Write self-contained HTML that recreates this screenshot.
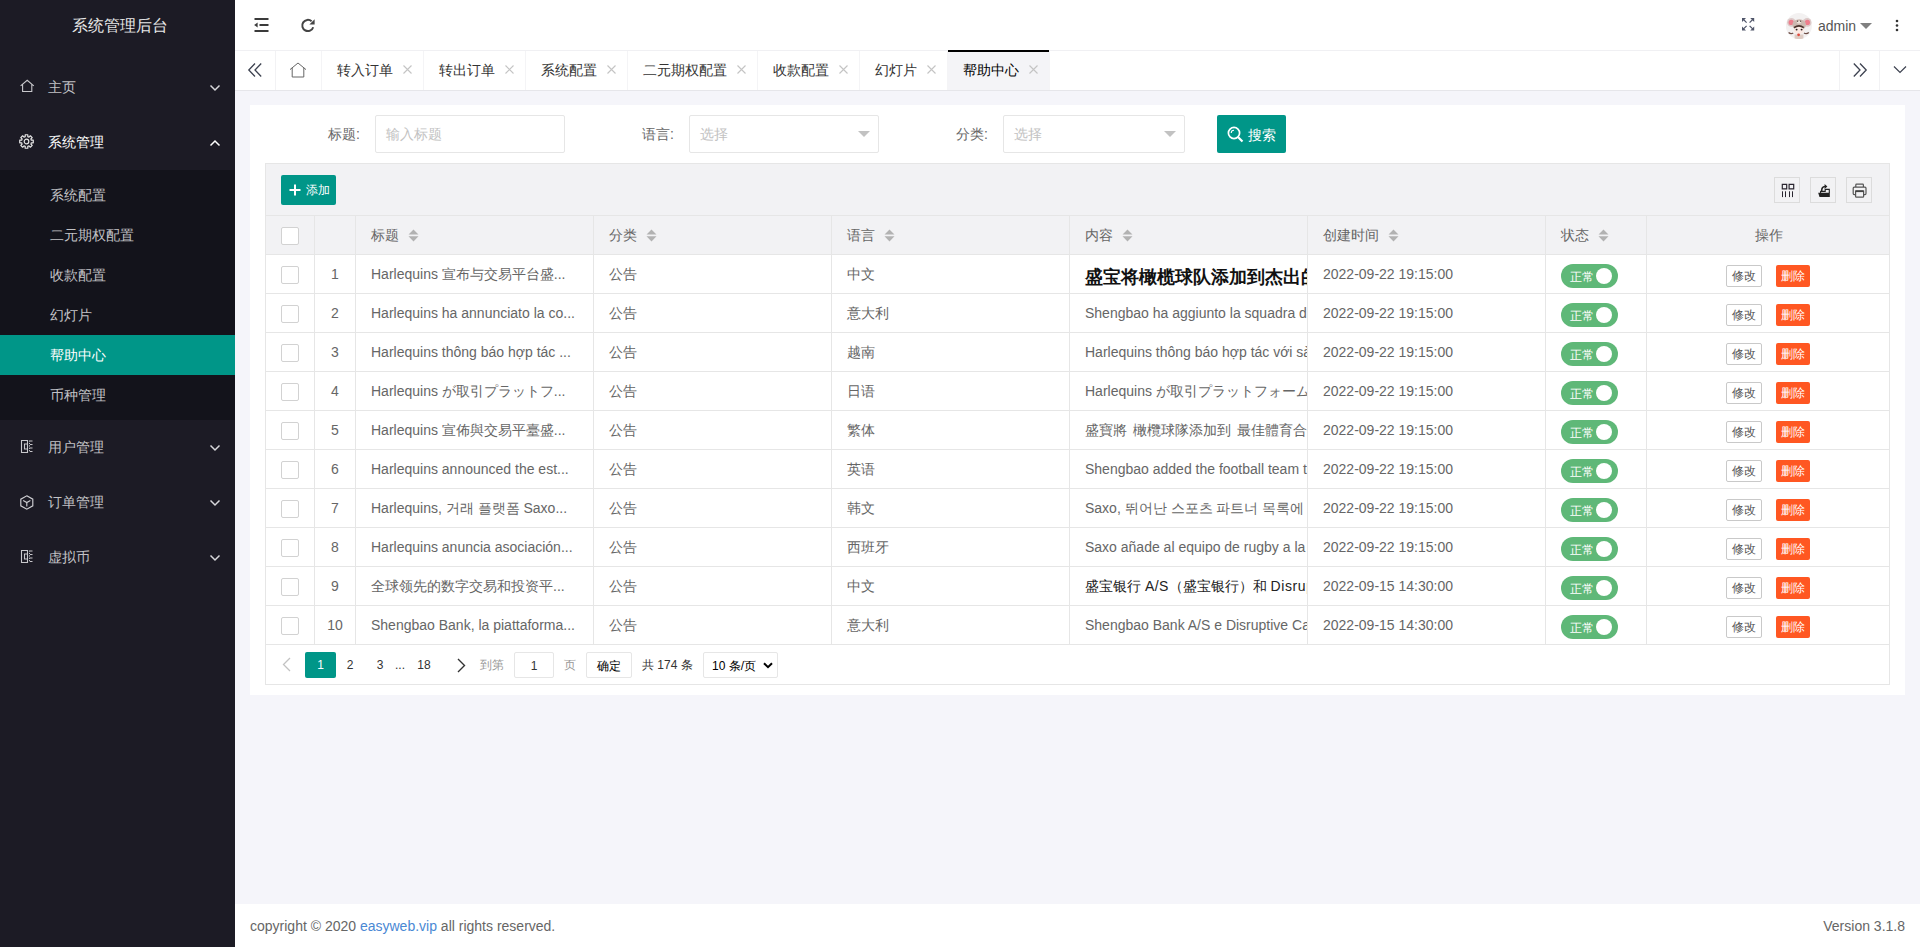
<!DOCTYPE html>
<html><head><meta charset="utf-8">
<style>
*{box-sizing:border-box;margin:0;padding:0}
html,body{width:1920px;height:947px;overflow:hidden}
body{position:relative;background:#f5f5fa;font-family:"Liberation Sans",sans-serif;font-size:14px;color:#666}
.abs{position:absolute}
svg{display:block}
/* sidebar */
#side{position:absolute;left:0;top:0;width:235px;height:947px;background:#1c1b25}
#logo{position:absolute;left:0;top:1px;width:235px;height:50px;line-height:50px;text-align:center;color:#e8e8e8;font-size:16px;padding-left:5px}
.nav{position:absolute;left:0;width:235px;height:55px;color:#c2c2c6}
.nav .ic{position:absolute;left:20px;top:20px}
.nav .tx{position:absolute;left:48px;top:1px;line-height:55px;font-size:14px}
.nav .ar{position:absolute;left:209px;top:25px}
#sub{position:absolute;left:0;top:170px;width:235px;height:250px;background:#13131b}
.si{position:absolute;left:0;width:235px;height:40px;line-height:40px;padding-left:50px;color:#c2c2c6;font-size:14px}
.si.on{background:#009688;color:#fff}
/* header */
#hdr{position:absolute;left:235px;top:0;width:1685px;height:51px;background:#fff;border-bottom:1px solid #f0f0f3}
#tabs{position:absolute;left:235px;top:51px;width:1685px;height:40px;background:#fff;border-bottom:1px solid #e6e6ea}
.tab{position:absolute;top:0;height:39px;line-height:39px;border-right:1px solid #f4f4f6;font-size:14px;color:#333;padding-left:15px}
.tab .x{position:absolute;top:14px}
/* card */
#card{position:absolute;left:250px;top:105px;width:1655px;height:590px;background:#fff}
.lbl{position:absolute;top:115px;height:38px;line-height:38px;font-size:14px;color:#666}
.inp{position:absolute;top:115px;height:38px;border:1px solid #e6e6e6;background:#fff;border-radius:2px;line-height:36px;padding-left:10px;color:#c2c2c2;font-size:14px}
.caret{position:absolute;width:0;height:0;border-left:6px solid transparent;border-right:6px solid transparent;border-top:6px solid #c2c2c2}
.btn{position:absolute;background:#009688;color:#fff;border-radius:2px}
/* table */
#tbl{position:absolute;left:265px;top:163px;width:1625px;height:522px;border:1px solid #e6e6e6;background:#fff}
#tool{position:absolute;left:0;top:0;width:1623px;height:52px;background:#f2f2f4;border-bottom:1px solid #e6e6e6}
.tb{position:absolute;top:13px;width:26px;height:26px;border:1px solid #dcdcdc}
#thead{position:absolute;left:0;top:52px;width:1623px;height:39px;background:#f2f2f4;border-bottom:1px solid #e6e6e6}
.row{position:absolute;left:0;width:1623px;height:39px;border-bottom:1px solid #e6e6e6}
.c{position:absolute;top:0;height:38px;line-height:38px;border-right:1px solid #e6e6e6;padding:0 15px;white-space:nowrap;overflow:hidden;font-size:14px;color:#666}
.chk{position:absolute;left:15px;top:11px;width:18px;height:18px;border:1px solid #d2d2d2;border-radius:2px;background:#fff}
.sort{position:absolute;top:13px}
.sw{position:absolute;left:15px;top:9px;width:57px;height:24px;border-radius:12px;background:#5fb878;color:#fff;font-size:12px;line-height:26px;padding-left:9px}
.sw i{position:absolute;left:35px;top:4px;width:16px;height:16px;border-radius:50%;background:#fff}
.bx{position:absolute;top:10px;height:22px;line-height:20px;font-size:12px;padding:0 5px;border-radius:2px}
/* pager */
#pager{position:absolute;left:0;top:481px;width:1623px;height:39px}
.pg{position:absolute;top:7px;height:26px;line-height:26px;font-size:12px;color:#333}
#foot{position:absolute;left:235px;top:904px;width:1685px;height:43px;background:#fff;line-height:44px;font-size:14px;color:#666;padding:0 15px}
</style></head><body>
<div id="side">
  <div id="logo">系统管理后台</div>
  <div class="nav" style="top:59px">
    <svg class="ic" width="15" height="14" viewBox="0 0 15 14"><path d="M0.6 6.8 L7.2 1.3 L13.8 6.8 M2.6 5.2 V12.5 H11.8 V5.2" fill="none" stroke="#c8c8cc" stroke-width="1.1"/></svg>
    <span class="tx">主页</span>
    <svg class="ar" width="12" height="8" viewBox="0 0 12 8"><path d="M1.5 1.5 L6 6 L10.5 1.5" fill="none" stroke="#d8d8dc" stroke-width="1.5"/></svg>
  </div>
  <div class="nav" style="top:114px;color:#fff">
    <svg class="ic" style="top:20px;left:19px" width="15" height="15" viewBox="0 0 15 15"><path d="M5.59 2.88 L6.21 2.67 L6.18 0.73 L8.82 0.73 L8.79 2.67 L9.41 2.88 L10.00 3.17 L11.36 1.78 L13.22 3.64 L11.83 5.00 L12.12 5.59 L12.33 6.21 L14.27 6.18 L14.27 8.82 L12.33 8.79 L12.12 9.41 L11.83 10.00 L13.22 11.36 L11.36 13.22 L10.00 11.83 L9.41 12.12 L8.79 12.33 L8.82 14.27 L6.18 14.27 L6.21 12.33 L5.59 12.12 L5.00 11.83 L3.64 13.22 L1.78 11.36 L3.17 10.00 L2.88 9.41 L2.67 8.79 L0.73 8.82 L0.73 6.18 L2.67 6.21 L2.88 5.59 L3.17 5.00 L1.78 3.64 L3.64 1.78 L5.00 3.17 Z" fill="none" stroke="#e6e6e6" stroke-width="1.2" stroke-linejoin="round"/><circle cx="7.5" cy="7.5" r="2.3" fill="none" stroke="#e6e6e6" stroke-width="1.2"/></svg>
    <span class="tx">系统管理</span>
    <svg class="ar" width="12" height="8" viewBox="0 0 12 8"><path d="M1.5 6.5 L6 2 L10.5 6.5" fill="none" stroke="#fff" stroke-width="1.5"/></svg>
  </div>
  <div id="sub">
    <div class="si" style="top:5px">系统配置</div>
    <div class="si" style="top:45px">二元期权配置</div>
    <div class="si" style="top:85px">收款配置</div>
    <div class="si" style="top:125px">幻灯片</div>
    <div class="si on" style="top:165px">帮助中心</div>
    <div class="si" style="top:205px">币种管理</div>
  </div>
  <div class="nav" style="top:419px">
    <svg class="ic" style="top:20px" width="14" height="15" viewBox="0 0 14 15"><path d="M1.5 1.5 H7.5 V13.5 H1.5 Z M4.5 5 H7.5 V10 H4.5 Z" fill="none" stroke="#c8c8cc" stroke-width="1.1"/><path d="M9.5 1.5 V13.5" stroke="#c8c8cc" stroke-width="1" stroke-dasharray="1.2 1.2"/><path d="M10 2 H12.5 M10 5.5 H12.5 M10 9 H12.5 M10 12.5 H12.5" stroke="#c8c8cc" stroke-width="1.2"/></svg>
    <span class="tx">用户管理</span>
    <svg class="ar" width="12" height="8" viewBox="0 0 12 8"><path d="M1.5 1.5 L6 6 L10.5 1.5" fill="none" stroke="#d8d8dc" stroke-width="1.5"/></svg>
  </div>
  <div class="nav" style="top:474px">
    <svg class="ic" style="top:21px" width="14" height="15" viewBox="0 0 14 15"><path d="M6.8 0.8 L12.8 4.2 V10.8 L6.8 14.2 L0.8 10.8 V4.2 Z M3.2 5.6 L6.8 7.5 L10.4 5.6 M6.8 7.5 V11.6" fill="none" stroke="#d0d0d4" stroke-width="1.15"/></svg>
    <span class="tx">订单管理</span>
    <svg class="ar" width="12" height="8" viewBox="0 0 12 8"><path d="M1.5 1.5 L6 6 L10.5 1.5" fill="none" stroke="#d8d8dc" stroke-width="1.5"/></svg>
  </div>
  <div class="nav" style="top:529px">
    <svg class="ic" style="top:20px" width="14" height="15" viewBox="0 0 14 15"><path d="M1.5 1.5 H7.5 V13.5 H1.5 Z M4.5 5 H7.5 V10 H4.5 Z" fill="none" stroke="#c8c8cc" stroke-width="1.1"/><path d="M9.5 1.5 V13.5" stroke="#c8c8cc" stroke-width="1" stroke-dasharray="1.2 1.2"/><path d="M10 2 H12.5 M10 5.5 H12.5 M10 9 H12.5 M10 12.5 H12.5" stroke="#c8c8cc" stroke-width="1.2"/></svg>
    <span class="tx">虚拟币</span>
    <svg class="ar" width="12" height="8" viewBox="0 0 12 8"><path d="M1.5 1.5 L6 6 L10.5 1.5" fill="none" stroke="#d8d8dc" stroke-width="1.5"/></svg>
  </div>
</div>

<div id="hdr">
  <svg class="abs" style="left:18px;top:18px" width="16" height="14" viewBox="0 0 16 14"><path d="M1.5 1 H15.5 M6.5 7 H15.5 M1.5 13 H15.5" stroke="#3a3a3a" stroke-width="1.8" fill="none"/><path d="M1.2 7 L4.6 4.4 V9.6 Z" fill="#3a3a3a"/></svg>
  <svg class="abs" style="left:65px;top:18px" width="16" height="16" viewBox="0 0 16 16"><path d="M13.2 9.2 A5.6 5.6 0 1 1 11.6 3.3" stroke="#444" stroke-width="2" fill="none"/><path d="M14.6 1.2 V6.4 H9.4 Z" fill="#444"/></svg>
  <svg class="abs" style="left:1501px;top:12px" width="26" height="26" viewBox="0 0 26 26"><path d="M6 6 H10 L6 10 Z M18.2 6 H14.2 L18.2 10 Z M6 18.4 H10 L6 14.4 Z M18.2 18.4 H14.2 L18.2 14.4 Z" fill="#50566a"/><path d="M7 7 L10.6 10.6 M17.2 7 L13.6 10.6 M7 17.4 L10.6 13.8 M17.2 17.4 L13.6 13.8" stroke="#50566a" stroke-width="1.2"/></svg>
  <svg class="abs" style="left:1548px;top:10px" width="32" height="32" viewBox="0 0 32 32"><circle cx="15.9" cy="16" r="13" fill="#f3f1f1"/><circle cx="8.4" cy="12.4" r="4.3" fill="#dcc9c8"/><circle cx="8.2" cy="12.4" r="2.6" fill="#ee7d8c"/><circle cx="24.2" cy="12.4" r="4.3" fill="#dcc9c8"/><circle cx="24.4" cy="12.4" r="2.6" fill="#ee7d8c"/><ellipse cx="16.2" cy="14.8" rx="6.8" ry="5.6" fill="#cdb8b0"/><ellipse cx="16" cy="12.3" rx="2.2" ry="1.3" fill="#efe3da"/><circle cx="14.6" cy="11.2" r="0.6" fill="#4a3a36"/><circle cx="17.6" cy="11.2" r="0.6" fill="#4a3a36"/><ellipse cx="16" cy="20.4" rx="5" ry="3.8" fill="#fbe9e3"/><path d="M11 17.6 Q16 14.2 20.8 17.6" stroke="#4b332d" stroke-width="1.6" fill="none"/><circle cx="13.6" cy="19.6" r="0.95" fill="#2a1d1d"/><circle cx="18.6" cy="19.6" r="0.95" fill="#2a1d1d"/><path d="M5.6 22.4 Q8 24.6 10.2 23 M21 23 Q23.4 24.6 25.8 22.4" stroke="#6e4c44" stroke-width="1.3" fill="none"/><path d="M11.6 24.6 H20.4 V28.4 Q16 29.6 11.6 28.4 Z" fill="#ddcbc3"/><circle cx="15.6" cy="24.8" r="1.4" fill="#e2483c"/></svg>
  <span class="abs" style="left:1583px;top:0;line-height:52px;font-size:14px;color:#555">admin</span>
  <div class="caret" style="left:1625px;top:23px;border-left-width:6px;border-right-width:6px;border-top:6px solid #808080"></div>
  <svg class="abs" style="left:1660px;top:19px" width="4" height="13" viewBox="0 0 4 13"><circle cx="2" cy="2" r="1.3" fill="#333"/><circle cx="2" cy="6.5" r="1.3" fill="#333"/><circle cx="2" cy="11" r="1.3" fill="#333"/></svg>
</div>
<div id="tabs">
  <div class="tab" style="left:0;width:41px;padding:0;border-right:1px solid #f2f2f4"><svg class="abs" style="left:12px;top:11px" width="16" height="16" viewBox="0 0 16 16"><path d="M8 1.5 L1.8 8 L8 14.5 M14.2 1.5 L8 8 L14.2 14.5" stroke="#3d4250" stroke-width="1.3" fill="none"/></svg></div>
  <div class="tab" style="left:41px;width:46px;padding:0"><svg class="abs" style="left:13px;top:11px" width="18" height="16" viewBox="0 0 18 16"><path d="M1 7.6 L9 1 L17 7.6 M3.2 5.8 V15 H14.8 V5.8" stroke="#666" stroke-width="1" fill="none"/></svg></div>
  <div class="tab" style="left:87px;width:102px">转入订单<svg class="x" style="left:80.5px" width="9" height="9" viewBox="0 0 9 9"><path d="M.5 .5 L8.5 8.5 M8.5 .5 L.5 8.5" stroke="#c4c4c4" stroke-width="1.1"/></svg></div>
  <div class="tab" style="left:189px;width:102px">转出订单<svg class="x" style="left:80.5px" width="9" height="9" viewBox="0 0 9 9"><path d="M.5 .5 L8.5 8.5 M8.5 .5 L.5 8.5" stroke="#c4c4c4" stroke-width="1.1"/></svg></div>
  <div class="tab" style="left:291px;width:102px">系统配置<svg class="x" style="left:80.5px" width="9" height="9" viewBox="0 0 9 9"><path d="M.5 .5 L8.5 8.5 M8.5 .5 L.5 8.5" stroke="#c4c4c4" stroke-width="1.1"/></svg></div>
  <div class="tab" style="left:393px;width:130px">二元期权配置<svg class="x" style="left:108.5px" width="9" height="9" viewBox="0 0 9 9"><path d="M.5 .5 L8.5 8.5 M8.5 .5 L.5 8.5" stroke="#c4c4c4" stroke-width="1.1"/></svg></div>
  <div class="tab" style="left:523px;width:102px">收款配置<svg class="x" style="left:80.5px" width="9" height="9" viewBox="0 0 9 9"><path d="M.5 .5 L8.5 8.5 M8.5 .5 L.5 8.5" stroke="#c4c4c4" stroke-width="1.1"/></svg></div>
  <div class="tab" style="left:625px;width:88px">幻灯片<svg class="x" style="left:66.5px" width="9" height="9" viewBox="0 0 9 9"><path d="M.5 .5 L8.5 8.5 M8.5 .5 L.5 8.5" stroke="#c4c4c4" stroke-width="1.1"/></svg></div>
  <div class="tab" style="left:713px;width:102px;background:#f4f4f7;color:#000">帮助中心<svg class="x" style="left:80.5px" width="9" height="9" viewBox="0 0 9 9"><path d="M.5 .5 L8.5 8.5 M8.5 .5 L.5 8.5" stroke="#c4c4c4" stroke-width="1.1"/></svg><div class="abs" style="left:0;top:-1px;width:101px;height:2px;background:#000"></div></div>
  <div class="tab" style="left:1604px;width:41px;padding:0;border-left:1px solid #f2f2f4;border-right:1px solid #f2f2f4"><svg class="abs" style="left:12px;top:11px" width="16" height="16" viewBox="0 0 16 16"><path d="M1.8 1.5 L8 8 L1.8 14.5 M8 1.5 L14.2 8 L8 14.5" stroke="#3d4250" stroke-width="1.3" fill="none"/></svg></div>
  <div class="tab" style="left:1645px;width:40px;padding:0;border-right:0"><svg class="abs" style="left:13px;top:14px" width="14" height="9" viewBox="0 0 14 9"><path d="M1 1.5 L7 7.5 L13 1.5" stroke="#3d4250" stroke-width="1.2" fill="none"/></svg></div>
</div>
<div id="card"></div>
<div class="lbl" style="left:295px;width:80px;text-align:right;padding-right:15px">标题:</div>
<div class="inp" style="left:375px;width:190px">输入标题</div>
<div class="lbl" style="left:609px;width:80px;text-align:right;padding-right:15px">语言:</div>
<div class="inp" style="left:689px;width:190px">选择<div class="caret" style="left:168px;top:15px"></div></div>
<div class="lbl" style="left:923px;width:80px;text-align:right;padding-right:15px">分类:</div>
<div class="inp" style="left:1003px;width:182px">选择<div class="caret" style="left:160px;top:15px"></div></div>
<div class="btn" style="left:1217px;top:115px;width:69px;height:38px;line-height:38px;font-size:14px"><svg class="abs" style="left:10px;top:11px" width="17" height="17" viewBox="0 0 17 17"><circle cx="7" cy="7" r="5.6" stroke="#fff" stroke-width="1.7" fill="none"/><path d="M11.2 11.2 L15.5 15.5" stroke="#fff" stroke-width="2.2"/><path d="M4.2 7 A2.8 2.8 0 0 1 7 4.2" stroke="#fff" stroke-width="1.1" fill="none"/></svg><span class="abs" style="left:31px;top:1px">搜索</span></div>
<div id="tbl">
<div id="tool">
<div class="btn" style="left:15px;top:11px;width:55px;height:30px;line-height:30px;font-size:12px"><svg class="abs" style="left:8px;top:9px" width="12" height="12" viewBox="0 0 12 12"><path d="M6 0.5 V11.5 M0.5 6 H11.5" stroke="#fff" stroke-width="2"/></svg><span class="abs" style="left:25px;top:0">添加</span></div>
<div class="tb" style="left:1508px"><svg class="abs" style="left:-1px;top:-1px" width="26" height="26" viewBox="0 0 26 26"><path d="M8.3 7.3 H12.7 V11.9 H8.3 Z M15.1 7.3 H19.7 V11.9 H15.1 Z" stroke="#2a2630" stroke-width="1.2" fill="none"/><path d="M8.5 14.3 V20.1 M11.5 14.3 V20.1 M15.5 14.3 V20.1 M18.5 14.3 V20.1" stroke="#2a2630" stroke-width="1"/></svg></div>
<div class="tb" style="left:1544px"><svg class="abs" style="left:-1px;top:-1px" width="26" height="26" viewBox="0 0 26 26"><path d="M10.6 15.9 V14.4 H15.2 V12.4 H19.3 V15.9" stroke="#222" stroke-width="1.1" fill="none"/><path d="M8.2 15.8 H19.8 V20 H9.5 Z" fill="#222"/><path d="M11.7 14 Q11.5 10 15 9.6" stroke="#222" stroke-width="1.5" fill="none"/><path d="M14.6 7 L17.4 9.5 L14.6 12 Z" fill="#222"/></svg></div>
<div class="tb" style="left:1580px"><svg class="abs" style="left:-1px;top:-1px" width="26" height="26" viewBox="0 0 26 26"><path d="M9.8 10 V8 Q9.8 7.2 10.6 7.2 H16.6 Q17.4 7.2 17.4 8 V10" stroke="#555" stroke-width="1.2" fill="none"/><path d="M9.4 17.6 H8.2 Q7.2 17.6 7.2 16.6 V11.2 Q7.2 10.2 8.2 10.2 H19 Q20 10.2 20 11.2 V16.6 Q20 17.6 19 17.6 H17.8" stroke="#555" stroke-width="1.2" fill="none"/><path d="M9.6 14.2 H17.6 V19.4 Q17.6 20.2 16.8 20.2 H10.4 Q9.6 20.2 9.6 19.4 Z" stroke="#555" stroke-width="1.2" fill="none"/><path d="M9.6 14.2 H17.6" stroke="#444" stroke-width="1.8"/></svg></div>
</div>
<div id="thead">
<div class="c" style="left:0px;width:49px;height:39px;line-height:39px"><div class="chk"></div></div>
<div class="c" style="left:49px;width:41px;height:39px;line-height:39px"></div>
<div class="c" style="left:90px;width:238px;height:39px;line-height:39px">标题<svg class="sort" style="left:52px" width="11" height="13" viewBox="0 0 11 13"><path d="M5.5 0.5 L10.5 5.5 H0.5 Z M0.5 7.3 H10.5 L5.5 12.5 Z" fill="#b2b2b2"/></svg></div>
<div class="c" style="left:328px;width:238px;height:39px;line-height:39px">分类<svg class="sort" style="left:52px" width="11" height="13" viewBox="0 0 11 13"><path d="M5.5 0.5 L10.5 5.5 H0.5 Z M0.5 7.3 H10.5 L5.5 12.5 Z" fill="#b2b2b2"/></svg></div>
<div class="c" style="left:566px;width:238px;height:39px;line-height:39px">语言<svg class="sort" style="left:52px" width="11" height="13" viewBox="0 0 11 13"><path d="M5.5 0.5 L10.5 5.5 H0.5 Z M0.5 7.3 H10.5 L5.5 12.5 Z" fill="#b2b2b2"/></svg></div>
<div class="c" style="left:804px;width:238px;height:39px;line-height:39px">内容<svg class="sort" style="left:52px" width="11" height="13" viewBox="0 0 11 13"><path d="M5.5 0.5 L10.5 5.5 H0.5 Z M0.5 7.3 H10.5 L5.5 12.5 Z" fill="#b2b2b2"/></svg></div>
<div class="c" style="left:1042px;width:238px;height:39px;line-height:39px">创建时间<svg class="sort" style="left:80px" width="11" height="13" viewBox="0 0 11 13"><path d="M5.5 0.5 L10.5 5.5 H0.5 Z M0.5 7.3 H10.5 L5.5 12.5 Z" fill="#b2b2b2"/></svg></div>
<div class="c" style="left:1280px;width:101px;height:39px;line-height:39px">状态<svg class="sort" style="left:52px" width="11" height="13" viewBox="0 0 11 13"><path d="M5.5 0.5 L10.5 5.5 H0.5 Z M0.5 7.3 H10.5 L5.5 12.5 Z" fill="#b2b2b2"/></svg></div>
<div class="c" style="left:1381px;width:243px;text-align:center;border-right:0;height:39px;line-height:39px">操作</div>
</div>
<div class="row" style="top:91px">
<div class="c" style="left:0px;width:49px"><div class="chk"></div></div>
<div class="c" style="left:49px;width:41px;text-align:center;padding:0">1</div>
<div class="c" style="left:90px;width:238px">Harlequins 宣布与交易平台盛...</div>
<div class="c" style="left:328px;width:238px">公告</div>
<div class="c" style="left:566px;width:238px">中文</div>
<div class="c" style="left:804px;width:238px;padding-right:0"><b style="font-size:18px;color:#111;position:relative;top:3px">盛宝将橄榄球队添加到杰出的体育合作伙伴名单中</b></div>
<div class="c" style="left:1042px;width:238px">2022-09-22 19:15:00</div>
<div class="c" style="left:1280px;width:101px"><div class="sw">正常<i></i></div></div>
<div class="c" style="left:1381px;width:243px;border-right:0"><div class="bx" style="left:79px;border:1px solid #c9c9c9;background:#fff;color:#555">修改</div><div class="bx" style="left:129px;width:34px;line-height:22px;background:#ff5722;color:#fff">删除</div></div>
</div>
<div class="row" style="top:130px">
<div class="c" style="left:0px;width:49px"><div class="chk"></div></div>
<div class="c" style="left:49px;width:41px;text-align:center;padding:0">2</div>
<div class="c" style="left:90px;width:238px">Harlequins ha annunciato la co...</div>
<div class="c" style="left:328px;width:238px">公告</div>
<div class="c" style="left:566px;width:238px">意大利</div>
<div class="c" style="left:804px;width:238px;padding-right:0">Shengbao ha aggiunto la squadra di rugby</div>
<div class="c" style="left:1042px;width:238px">2022-09-22 19:15:00</div>
<div class="c" style="left:1280px;width:101px"><div class="sw">正常<i></i></div></div>
<div class="c" style="left:1381px;width:243px;border-right:0"><div class="bx" style="left:79px;border:1px solid #c9c9c9;background:#fff;color:#555">修改</div><div class="bx" style="left:129px;width:34px;line-height:22px;background:#ff5722;color:#fff">删除</div></div>
</div>
<div class="row" style="top:169px">
<div class="c" style="left:0px;width:49px"><div class="chk"></div></div>
<div class="c" style="left:49px;width:41px;text-align:center;padding:0">3</div>
<div class="c" style="left:90px;width:238px">Harlequins thông báo hợp tác ...</div>
<div class="c" style="left:328px;width:238px">公告</div>
<div class="c" style="left:566px;width:238px">越南</div>
<div class="c" style="left:804px;width:238px;padding-right:0">Harlequins thông báo hợp tác với sàn giao dịch</div>
<div class="c" style="left:1042px;width:238px">2022-09-22 19:15:00</div>
<div class="c" style="left:1280px;width:101px"><div class="sw">正常<i></i></div></div>
<div class="c" style="left:1381px;width:243px;border-right:0"><div class="bx" style="left:79px;border:1px solid #c9c9c9;background:#fff;color:#555">修改</div><div class="bx" style="left:129px;width:34px;line-height:22px;background:#ff5722;color:#fff">删除</div></div>
</div>
<div class="row" style="top:208px">
<div class="c" style="left:0px;width:49px"><div class="chk"></div></div>
<div class="c" style="left:49px;width:41px;text-align:center;padding:0">4</div>
<div class="c" style="left:90px;width:238px">Harlequins が取引プラットフ...</div>
<div class="c" style="left:328px;width:238px">公告</div>
<div class="c" style="left:566px;width:238px">日语</div>
<div class="c" style="left:804px;width:238px;padding-right:0">Harlequins が取引プラットフォームの盛宝</div>
<div class="c" style="left:1042px;width:238px">2022-09-22 19:15:00</div>
<div class="c" style="left:1280px;width:101px"><div class="sw">正常<i></i></div></div>
<div class="c" style="left:1381px;width:243px;border-right:0"><div class="bx" style="left:79px;border:1px solid #c9c9c9;background:#fff;color:#555">修改</div><div class="bx" style="left:129px;width:34px;line-height:22px;background:#ff5722;color:#fff">删除</div></div>
</div>
<div class="row" style="top:247px">
<div class="c" style="left:0px;width:49px"><div class="chk"></div></div>
<div class="c" style="left:49px;width:41px;text-align:center;padding:0">5</div>
<div class="c" style="left:90px;width:238px">Harlequins 宣佈與交易平臺盛...</div>
<div class="c" style="left:328px;width:238px">公告</div>
<div class="c" style="left:566px;width:238px">繁体</div>
<div class="c" style="left:804px;width:238px;padding-right:0"><span style="word-spacing:2px">盛寶將 橄欖球隊添加到 最佳體育合作夥伴</span></div>
<div class="c" style="left:1042px;width:238px">2022-09-22 19:15:00</div>
<div class="c" style="left:1280px;width:101px"><div class="sw">正常<i></i></div></div>
<div class="c" style="left:1381px;width:243px;border-right:0"><div class="bx" style="left:79px;border:1px solid #c9c9c9;background:#fff;color:#555">修改</div><div class="bx" style="left:129px;width:34px;line-height:22px;background:#ff5722;color:#fff">删除</div></div>
</div>
<div class="row" style="top:286px">
<div class="c" style="left:0px;width:49px"><div class="chk"></div></div>
<div class="c" style="left:49px;width:41px;text-align:center;padding:0">6</div>
<div class="c" style="left:90px;width:238px">Harlequins announced the est...</div>
<div class="c" style="left:328px;width:238px">公告</div>
<div class="c" style="left:566px;width:238px">英语</div>
<div class="c" style="left:804px;width:238px;padding-right:0">Shengbao added the football team to its</div>
<div class="c" style="left:1042px;width:238px">2022-09-22 19:15:00</div>
<div class="c" style="left:1280px;width:101px"><div class="sw">正常<i></i></div></div>
<div class="c" style="left:1381px;width:243px;border-right:0"><div class="bx" style="left:79px;border:1px solid #c9c9c9;background:#fff;color:#555">修改</div><div class="bx" style="left:129px;width:34px;line-height:22px;background:#ff5722;color:#fff">删除</div></div>
</div>
<div class="row" style="top:325px">
<div class="c" style="left:0px;width:49px"><div class="chk"></div></div>
<div class="c" style="left:49px;width:41px;text-align:center;padding:0">7</div>
<div class="c" style="left:90px;width:238px">Harlequins, 거래 플랫폼 Saxo...</div>
<div class="c" style="left:328px;width:238px">公告</div>
<div class="c" style="left:566px;width:238px">韩文</div>
<div class="c" style="left:804px;width:238px;padding-right:0">Saxo, 뛰어난 스포츠 파트너 목록에 추가</div>
<div class="c" style="left:1042px;width:238px">2022-09-22 19:15:00</div>
<div class="c" style="left:1280px;width:101px"><div class="sw">正常<i></i></div></div>
<div class="c" style="left:1381px;width:243px;border-right:0"><div class="bx" style="left:79px;border:1px solid #c9c9c9;background:#fff;color:#555">修改</div><div class="bx" style="left:129px;width:34px;line-height:22px;background:#ff5722;color:#fff">删除</div></div>
</div>
<div class="row" style="top:364px">
<div class="c" style="left:0px;width:49px"><div class="chk"></div></div>
<div class="c" style="left:49px;width:41px;text-align:center;padding:0">8</div>
<div class="c" style="left:90px;width:238px">Harlequins anuncia asociación...</div>
<div class="c" style="left:328px;width:238px">公告</div>
<div class="c" style="left:566px;width:238px">西班牙</div>
<div class="c" style="left:804px;width:238px;padding-right:0">Saxo añade al equipo de rugby a la lista</div>
<div class="c" style="left:1042px;width:238px">2022-09-22 19:15:00</div>
<div class="c" style="left:1280px;width:101px"><div class="sw">正常<i></i></div></div>
<div class="c" style="left:1381px;width:243px;border-right:0"><div class="bx" style="left:79px;border:1px solid #c9c9c9;background:#fff;color:#555">修改</div><div class="bx" style="left:129px;width:34px;line-height:22px;background:#ff5722;color:#fff">删除</div></div>
</div>
<div class="row" style="top:403px">
<div class="c" style="left:0px;width:49px"><div class="chk"></div></div>
<div class="c" style="left:49px;width:41px;text-align:center;padding:0">9</div>
<div class="c" style="left:90px;width:238px">全球领先的数字交易和投资平...</div>
<div class="c" style="left:328px;width:238px">公告</div>
<div class="c" style="left:566px;width:238px">中文</div>
<div class="c" style="left:804px;width:238px;padding-right:0"><span style="color:#222">盛宝银行 <span style="letter-spacing:0.4px">A/S</span>（盛宝银行）和 <span style="letter-spacing:0.6px">Disruptive</span></span></div>
<div class="c" style="left:1042px;width:238px">2022-09-15 14:30:00</div>
<div class="c" style="left:1280px;width:101px"><div class="sw">正常<i></i></div></div>
<div class="c" style="left:1381px;width:243px;border-right:0"><div class="bx" style="left:79px;border:1px solid #c9c9c9;background:#fff;color:#555">修改</div><div class="bx" style="left:129px;width:34px;line-height:22px;background:#ff5722;color:#fff">删除</div></div>
</div>
<div class="row" style="top:442px">
<div class="c" style="left:0px;width:49px"><div class="chk"></div></div>
<div class="c" style="left:49px;width:41px;text-align:center;padding:0">10</div>
<div class="c" style="left:90px;width:238px">Shengbao Bank, la piattaforma...</div>
<div class="c" style="left:328px;width:238px">公告</div>
<div class="c" style="left:566px;width:238px">意大利</div>
<div class="c" style="left:804px;width:238px;padding-right:0">Shengbao Bank A/S e Disruptive Capital</div>
<div class="c" style="left:1042px;width:238px">2022-09-15 14:30:00</div>
<div class="c" style="left:1280px;width:101px"><div class="sw">正常<i></i></div></div>
<div class="c" style="left:1381px;width:243px;border-right:0"><div class="bx" style="left:79px;border:1px solid #c9c9c9;background:#fff;color:#555">修改</div><div class="bx" style="left:129px;width:34px;line-height:22px;background:#ff5722;color:#fff">删除</div></div>
</div>
<div id="pager"><svg class="abs" style="left:16px;top:12px" width="9" height="15" viewBox="0 0 9 15"><path d="M8 1 L1.5 7.5 L8 14" stroke="#c2c2c2" stroke-width="1.3" fill="none"/></svg><div class="pg" style="left:39px;width:31px;background:#009688;color:#fff;text-align:center;border-radius:2px">1</div><div class="pg" style="left:78px;width:12px;text-align:center">2</div><div class="pg" style="left:108px;width:12px;text-align:center">3</div><div class="pg" style="left:128px;width:12px;text-align:center">...</div><div class="pg" style="left:150px;width:16px;text-align:center">18</div><svg class="abs" style="left:191px;top:13px" width="9" height="15" viewBox="0 0 9 15"><path d="M1 1 L7.5 7.5 L1 14" stroke="#333" stroke-width="1.4" fill="none"/></svg><div class="pg" style="left:214px;color:#999">到第</div><div class="pg" style="left:248px;width:40px;border:1px solid #e6e6e6;border-radius:2px;text-align:center">1</div><div class="pg" style="left:298px;color:#999">页</div><div class="pg" style="left:320px;width:46px;border:1px solid #e6e6e6;border-radius:2px;text-align:center;color:#000">确定</div><div class="pg" style="left:376px">共 174 条</div><div class="pg" style="left:437px;width:75px;border:1px solid #e6e6e6;border-radius:2px;padding-left:8px;color:#000">10 条/页<svg class="abs" style="left:59px;top:9px" width="10" height="7" viewBox="0 0 10 7"><path d="M1 1.2 L5 5.2 L9 1.2" stroke="#000" stroke-width="2" fill="none"/></svg></div></div>
</div>
<div id="foot">copyright © 2020 <span style="color:#4a88d4">easyweb.vip</span> all rights reserved.<span style="position:absolute;right:15px;top:0">Version 3.1.8</span></div>
</body></html>
